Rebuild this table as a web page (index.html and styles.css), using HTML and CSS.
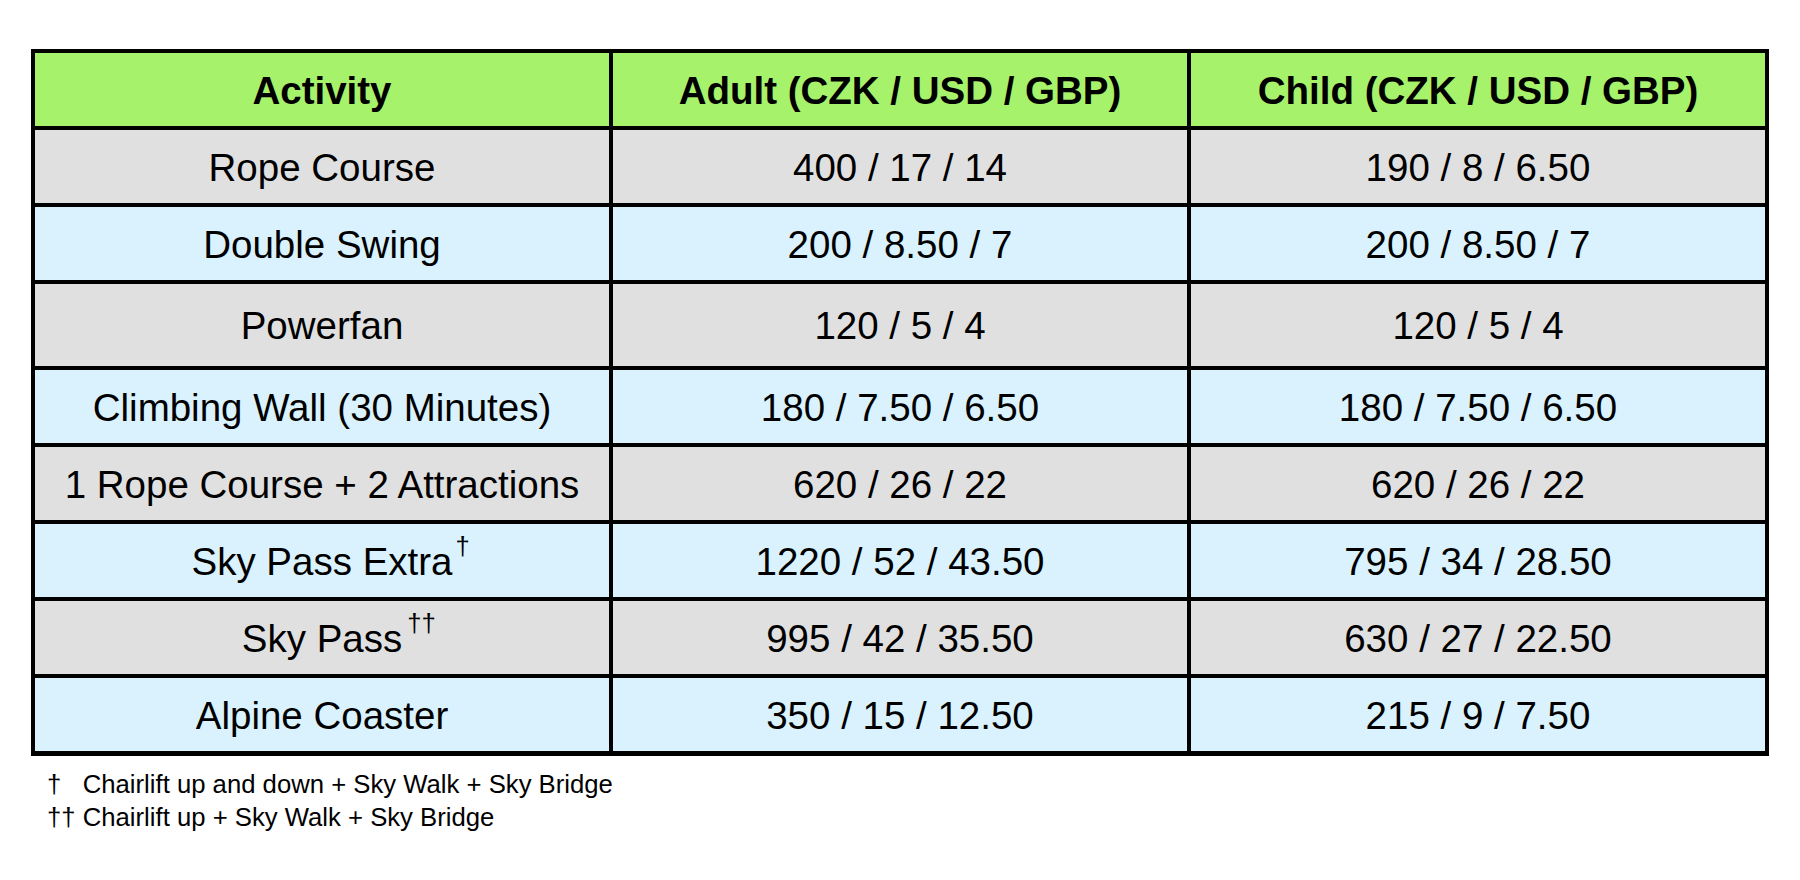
FILE: index.html
```html
<!DOCTYPE html>
<html lang="en">
<head>
<meta charset="utf-8">
<title>Prices</title>
<link rel="stylesheet" href="styles.css">
</head>
<body>
<main class="page">
  <table class="prices">
    <thead>
      <tr>
        <th>Activity</th>
        <th>Adult (CZK / USD / GBP)</th>
        <th>Child (CZK / USD / GBP)</th>
      </tr>
    </thead>
    <tbody>
      <tr class="gray"><td>Rope Course</td><td>400 / 17 / 14</td><td>190 / 8 / 6.50</td></tr>
      <tr class="blue"><td>Double Swing</td><td>200 / 8.50 / 7</td><td>200 / 8.50 / 7</td></tr>
      <tr class="gray tall"><td>Powerfan</td><td>120 / 5 / 4</td><td>120 / 5 / 4</td></tr>
      <tr class="blue"><td>Climbing Wall (30 Minutes)</td><td>180 / 7.50 / 6.50</td><td>180 / 7.50 / 6.50</td></tr>
      <tr class="gray"><td>1 Rope Course + 2 Attractions</td><td>620 / 26 / 22</td><td>620 / 26 / 22</td></tr>
      <tr class="blue"><td><span class="label">Sky Pass Extra<sup class="mark">†</sup></span></td><td>1220 / 52 / 43.50</td><td>795 / 34 / 28.50</td></tr>
      <tr class="gray"><td><span class="label">Sky Pass<sup class="mark mark-wide">††</sup></span></td><td>995 / 42 / 35.50</td><td>630 / 27 / 22.50</td></tr>
      <tr class="blue last"><td>Alpine Coaster</td><td>350 / 15 / 12.50</td><td>215 / 9 / 7.50</td></tr>
    </tbody>
  </table>
  <div class="notes">
    <p class="note">†&nbsp;&nbsp;&nbsp;Chairlift up and down + Sky Walk + Sky Bridge</p>
    <p class="note">†† Chairlift up + Sky Walk + Sky Bridge</p>
  </div>
</main>
</body>
</html>
```

FILE: styles.css
```css
html, body {
  margin: 0;
  padding: 0;
  background: #ffffff;
}

body {
  font-family: "Liberation Sans", Arial, sans-serif;
  color: #000000;
}

.page {
  padding: 49px 31px 0 31px;
}

.prices {
  width: 1738px;
  table-layout: fixed;
  border-collapse: separate;
  border-spacing: 0;
  border-top: 4px solid #000;
  border-left: 4px solid #000;
}

.prices th,
.prices td {
  box-sizing: border-box;
  width: 578px;
  height: 77px;
  padding: 2px 0 0 0;
  border-right: 4px solid #000;
  border-bottom: 4px solid #000;
  text-align: center;
  vertical-align: middle;
  font-size: 38.5px;
  line-height: normal;
}

.prices th {
  background: #a7f26b;
  font-weight: bold;
}

.prices .gray td {
  background: #e0e0e0;
}

.prices .blue td {
  background: #d9f2fe;
}

.prices .tall td {
  height: 86px;
}

.prices .last td {
  height: 78px;
  border-bottom-width: 5px;
}

.label {
  position: relative;
}

.mark {
  position: absolute;
  left: calc(100% + 3px);
  top: -6px;
  font-size: 25.7px;
  line-height: 1;
  vertical-align: baseline;
}

.mark-wide {
  left: calc(100% + 5px);
}

.notes {
  padding: 12px 0 0 16px;
}

.note {
  margin: 0;
  font-size: 25.7px;
  line-height: 33px;
  white-space: nowrap;
}
```
